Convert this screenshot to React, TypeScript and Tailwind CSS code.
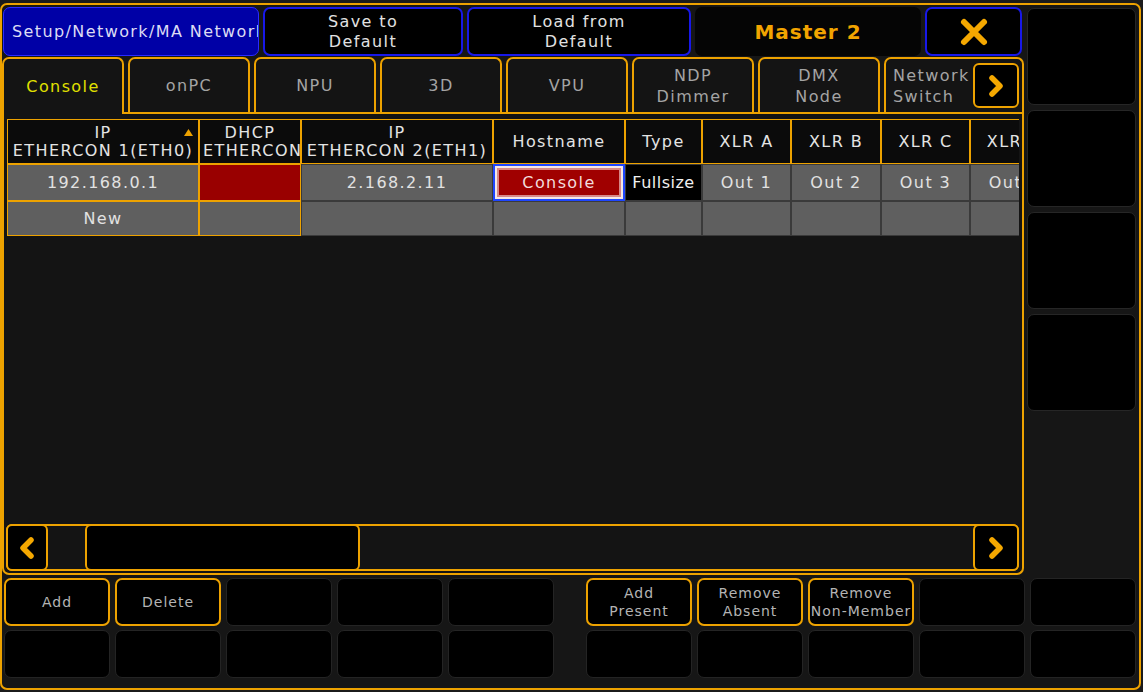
import React from "react";

const ORANGE = "#eda200";

function Chevron({ dir }: { dir: "left" | "right" }) {
  return (
    <svg width="18" height="26" viewBox="0 0 18 26">
      <polyline
        points={dir === "right" ? "5,5 13,13 5,21" : "13,5 5,13 13,21"}
        fill="none"
        stroke="#f5a800"
        strokeWidth="5.5"
        strokeLinecap="round"
        strokeLinejoin="round"
      />
    </svg>
  );
}

function CloseIcon() {
  return (
    <svg width="30" height="30" viewBox="0 0 30 30">
      <path d="M5 5 L25 25 M25 5 L5 25" stroke="#f5a800" strokeWidth="6" strokeLinecap="round" />
    </svg>
  );
}

function TitleBar() {
  return (
    <div className="mt-[2px] flex h-[49px] gap-[4px] pl-[1px]">
      <div className="flex w-[256px] items-center overflow-hidden whitespace-nowrap rounded-[7px] border border-[#2a2aff] bg-[#0000a6] pl-[8px] text-[#dcdcf4]">
        Setup/Network/MA Network
      </div>
      <div className="flex w-[200px] flex-col items-center justify-center rounded-[7px] border-2 border-[#1818e8] bg-black leading-[20px] text-[#e2e2e2]">
        <span>Save to</span>
        <span>Default</span>
      </div>
      <div className="flex w-[224px] flex-col items-center justify-center rounded-[7px] border-2 border-[#1818e8] bg-black leading-[20px] text-[#e2e2e2]">
        <span>Load from</span>
        <span>Default</span>
      </div>
      <div className="flex w-[226px] items-center justify-center rounded-[7px] bg-[#050505] text-[20px] font-bold tracking-[1px] text-[#f2a400]">
        Master 2
      </div>
      <div className="flex w-[97px] items-center justify-center rounded-[7px] border-2 border-[#1818e8] bg-black">
        <CloseIcon />
      </div>
    </div>
  );
}

const tabs = [
  ["Console"],
  ["onPC"],
  ["NPU"],
  ["3D"],
  ["VPU"],
  ["NDP", "Dimmer"],
  ["DMX", "Node"],
];

function Tabs() {
  return (
    <div className="flex h-[57px] gap-[4px] border-b-2 border-[#eda200]">
      {tabs.map((t, i) =>
        i === 0 ? (
          <div
            key={i}
            className="-mb-[2px] flex w-[122px] items-center justify-center rounded-t-[7px] border-2 border-b-0 border-[#eda200] bg-[#141414] text-[#e0e000]"
          >
            {t[0]}
          </div>
        ) : (
          <div
            key={i}
            className="flex w-[122px] flex-col items-center justify-center rounded-t-[7px] border-2 border-b-0 border-[#eda200] bg-[#141414] leading-[21px] text-[#a4a4a4]"
          >
            {t.map((l) => (
              <span key={l}>{l}</span>
            ))}
          </div>
        )
      )}
      <div className="flex flex-1 items-center justify-between rounded-t-[7px] border-2 border-b-0 border-[#eda200] bg-[#141414] pl-[7px] pr-[3px]">
        <div className="flex flex-col leading-[21px] text-[#a4a4a4]">
          <span>Network</span>
          <span>Switch</span>
        </div>
        <div className="flex h-[45px] w-[46px] items-center justify-center rounded-[6px] border-2 border-[#eda200] bg-black">
          <Chevron dir="right" />
        </div>
      </div>
    </div>
  );
}

const columns = [
  { w: 192, head: ["IP", "ETHERCON 1(ETH0)"], r1: "192.168.0.1", r2: "New" },
  { w: 102, head: ["DHCP", "ETHERCON 1(ETH0)"], r1: "", r2: "" },
  { w: 192, head: ["IP", "ETHERCON 2(ETH1)"], r1: "2.168.2.11", r2: "" },
  { w: 132, head: ["Hostname"], r1: "Console", r2: "" },
  { w: 77, head: ["Type"], r1: "Fullsize", r2: "" },
  { w: 89, head: ["XLR A"], r1: "Out 1", r2: "" },
  { w: 90, head: ["XLR B"], r1: "Out 2", r2: "" },
  { w: 89, head: ["XLR C"], r1: "Out 3", r2: "" },
  { w: 89, head: ["XLR D"], r1: "Out 4", r2: "" },
];

function HeaderCell({ col, index }: { col: (typeof columns)[number]; index: number }) {
  return (
    <div
      className="relative flex h-[45px] shrink-0 items-center overflow-hidden whitespace-nowrap border border-[#eda200] bg-[#0b0b0b] leading-[18px] text-[#e4e4e4]"
      style={{ width: col.w }}
    >
      <div className="w-full">
        {col.head.map((l, i) => (
          <div key={i} className={index === 1 && i === 1 ? "pl-[3px] text-left" : "text-center"}>
            {l}
          </div>
        ))}
      </div>
      {index === 0 && (
        <svg className="absolute right-[5px] top-[9px]" width="9" height="7" viewBox="0 0 9 7">
          <polygon points="4.5,0 9,7 0,7" fill="#eda200" />
        </svg>
      )}
    </div>
  );
}

function DataCell({ col, index, row }: { col: (typeof columns)[number]; index: number; row: 1 | 2 }) {
  const text = row === 1 ? col.r1 : col.r2;
  const h = row === 1 ? "h-[37px]" : "h-[35px]";
  if (row === 1 && index === 1) {
    return <div className={`${h} shrink-0 border border-[#eda200] bg-[#990000]`} style={{ width: col.w }} />;
  }
  if (row === 1 && index === 3) {
    return (
      <div
        className={`${h} shrink-0 border-2 border-[#1f46ff] bg-[#f4e6e6] p-[2px]`}
        style={{ width: col.w }}
      >
        <div className="flex h-full items-center justify-center border-2 border-[#d68888] bg-[#a00000] text-[#f2dcdc]">
          {text}
        </div>
      </div>
    );
  }
  if (row === 1 && index === 4) {
    return (
      <div
        className={`${h} flex shrink-0 items-center justify-center overflow-hidden whitespace-nowrap border border-[#3a3a3a] bg-black tracking-[0.5px] text-[#f0f0f0]`}
        style={{ width: col.w }}
      >
        {text}
      </div>
    );
  }
  const border = index < 2 ? "border-[#eda200]" : "border-[#3a3a3a]";
  return (
    <div
      className={`${h} ${border} flex shrink-0 items-center justify-center overflow-hidden whitespace-nowrap border bg-[#5f5f5f] text-[#e2e2e2]`}
      style={{ width: col.w }}
    >
      {text}
    </div>
  );
}

function Table() {
  return (
    <div className="ml-[1px] w-[1012px] overflow-hidden">
      <div className="flex">
        {columns.map((c, i) => (
          <HeaderCell key={i} col={c} index={i} />
        ))}
      </div>
      <div className="flex">
        {columns.map((c, i) => (
          <DataCell key={i} col={c} index={i} row={1} />
        ))}
      </div>
      <div className="flex">
        {columns.map((c, i) => (
          <DataCell key={i} col={c} index={i} row={2} />
        ))}
      </div>
    </div>
  );
}

function ScrollBar() {
  return (
    <div className="mb-[2px] flex h-[47px] w-[1013px] rounded-[6px] border-2 border-[#eda200] bg-[#141414]">
      <div className="-my-[2px] -ml-[2px] flex w-[42px] items-center justify-center rounded-[6px] border-2 border-[#eda200] bg-black">
        <Chevron dir="left" />
      </div>
      <div className="-my-[2px] ml-[37px] w-[275px] rounded-[6px] border-2 border-[#eda200] bg-black" />
      <div className="flex-1" />
      <div className="-my-[2px] -mr-[2px] flex w-[46px] items-center justify-center rounded-[6px] border-2 border-[#eda200] bg-black">
        <Chevron dir="right" />
      </div>
    </div>
  );
}

function Panel() {
  return (
    <div className="mt-[1px] flex h-[518px] flex-col">
      <Tabs />
      <div className="flex flex-1 flex-col rounded-b-[7px] border-x-2 border-b-2 border-[#eda200] bg-[#141414] pl-[2px] pt-[5px]">
        <Table />
        <div className="flex-1" />
        <ScrollBar />
      </div>
    </div>
  );
}

function RightColumn() {
  return (
    <div className="ml-[3px] mt-[3px] flex w-[109px] flex-col gap-[5px]">
      {[0, 1, 2, 3].map((i) => (
        <div key={i} className="h-[97px] rounded-[7px] border border-[#262626] bg-black" />
      ))}
    </div>
  );
}

function BottomButton({ label }: { label?: string[] }) {
  if (!label) {
    return <div className="w-[106px] rounded-[7px] border border-[#242424] bg-black" />;
  }
  return (
    <div className="flex w-[106px] flex-col items-center justify-center whitespace-nowrap rounded-[7px] border-2 border-[#eda200] bg-black text-[14px] leading-[18px] tracking-[1px] text-[#b4b4b4]">
      {label.map((l) => (
        <span key={l}>{l}</span>
      ))}
    </div>
  );
}

const row1Left: (string[] | undefined)[] = [["Add"], ["Delete"], undefined, undefined, undefined];
const row1Right: (string[] | undefined)[] = [
  ["Add", "Present"],
  ["Remove", "Absent"],
  ["Remove", "Non-Member"],
  undefined,
  undefined,
];
const empty: undefined[] = [undefined, undefined, undefined, undefined, undefined];

function BottomRow({ left, right }: { left: (string[] | undefined)[]; right: (string[] | undefined)[] }) {
  return (
    <div className="flex h-[48px]">
      <div className="flex gap-[5px]">
        {left.map((l, i) => (
          <BottomButton key={i} label={l} />
        ))}
      </div>
      <div className="ml-[32px] flex gap-[5px]">
        {right.map((l, i) => (
          <BottomButton key={i} label={l} />
        ))}
      </div>
    </div>
  );
}

export default function App() {
  return (
    <div className="h-[692px] w-[1143px] bg-[#1b1b1b] pt-[3px] font-['DejaVu_Sans',sans-serif] text-[16px] tracking-[1.4px]">
      <div
        className="flex h-[687px] w-[1141px] flex-col rounded-[7px] border-2 bg-[#161616]"
        style={{ borderColor: ORANGE }}
      >
        <div className="flex h-[570px]">
          <div className="flex w-[1022px] flex-col">
            <TitleBar />
            <Panel />
          </div>
          <RightColumn />
        </div>
        <div className="mt-[3px] flex flex-col gap-[4px] pl-[2px]">
          <BottomRow left={row1Left} right={row1Right} />
          <BottomRow left={empty} right={empty} />
        </div>
      </div>
    </div>
  );
}
